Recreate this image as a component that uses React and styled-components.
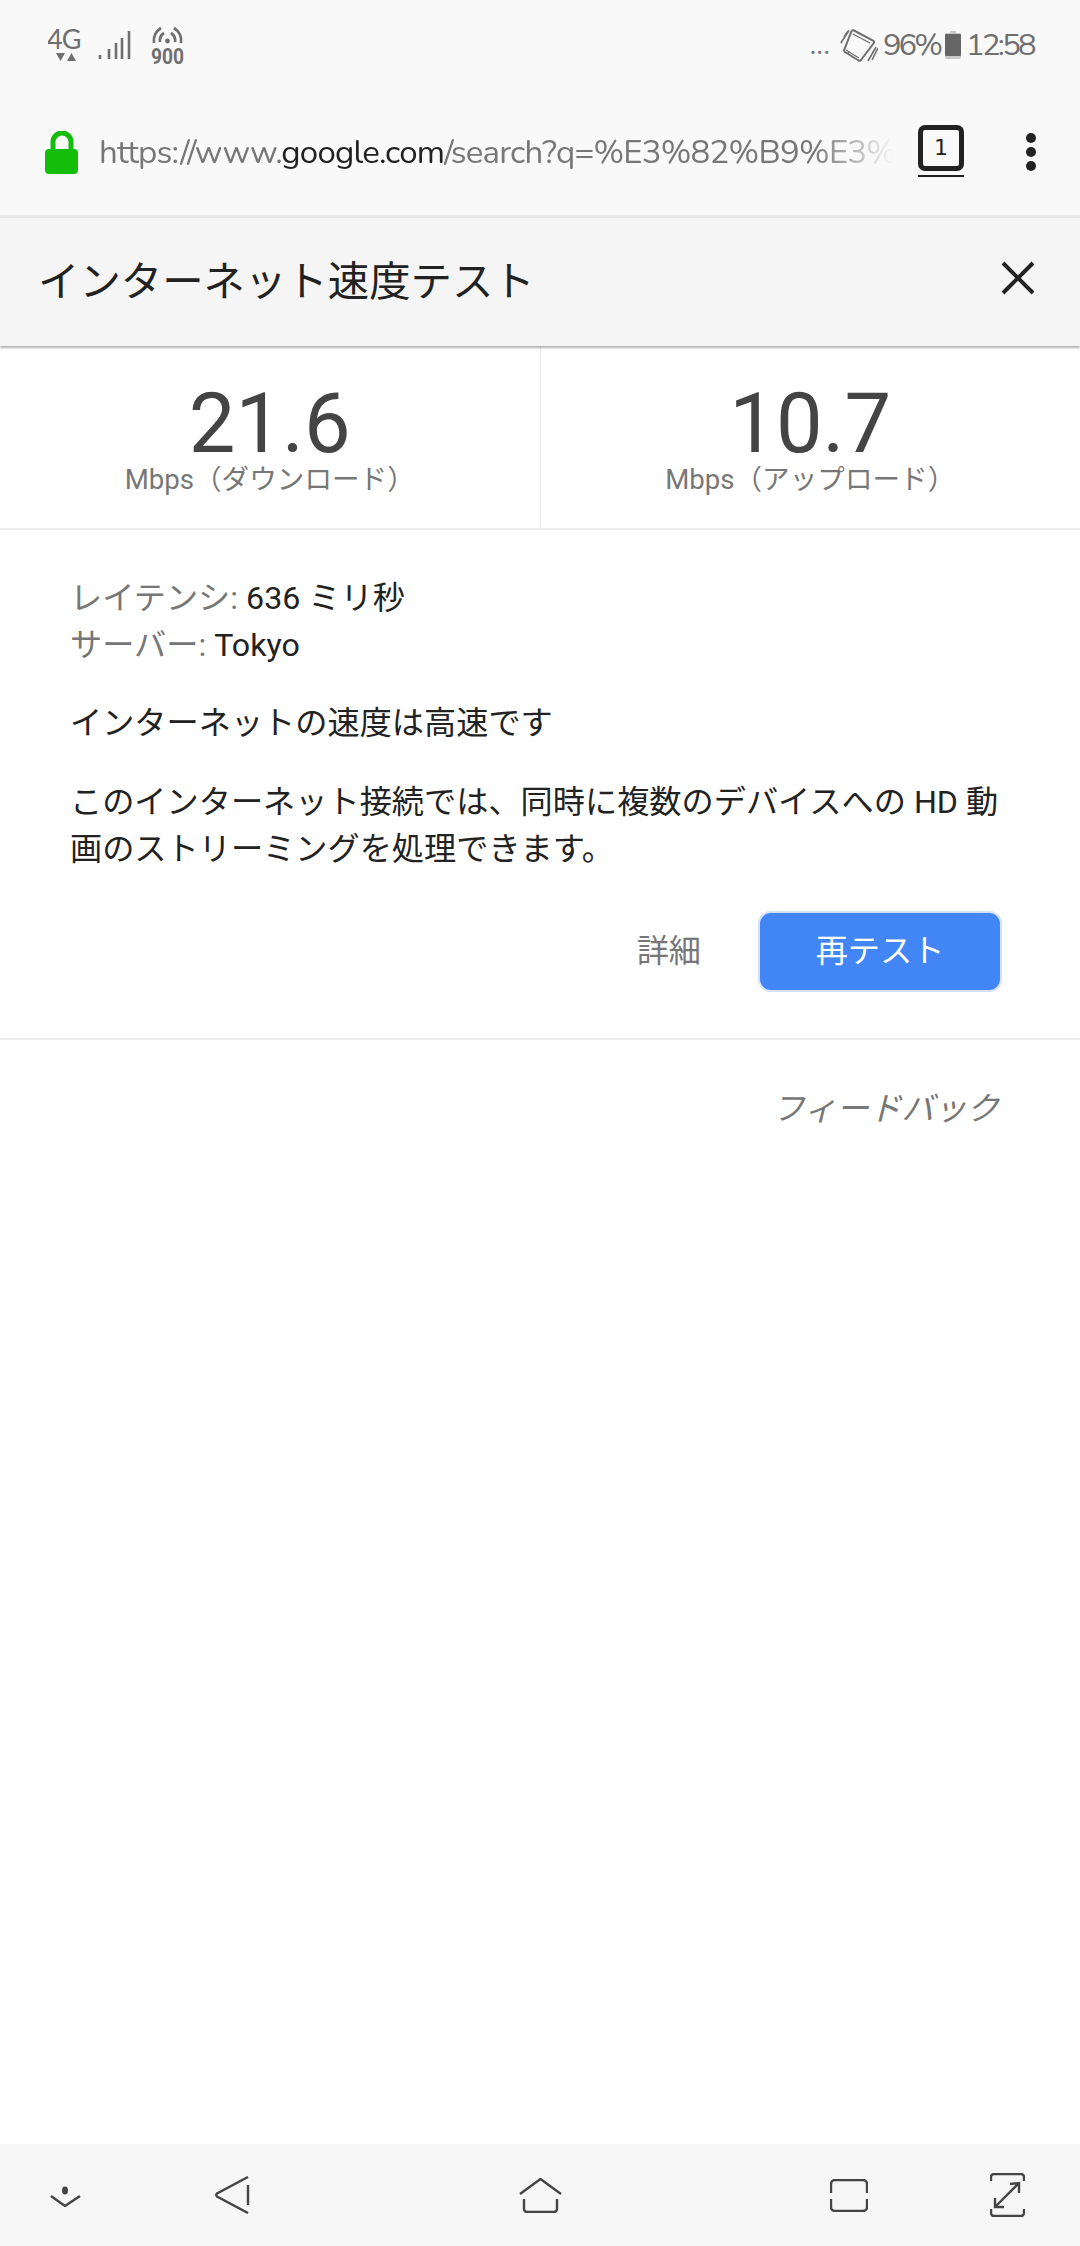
import React from "react"
import styled, { createGlobalStyle } from "styled-components"

const Global = createGlobalStyle`
  html, body { margin: 0; padding: 0; background: #fff; }
  body { font-family: Roboto, "Noto Sans CJK JP", sans-serif; }
`

const Page = styled.div`
  width: 1080px;
  height: 2246px;
  display: flex;
  flex-direction: column;
  overflow: hidden;
  background: #fff;
`

const StatusBar = styled.div`
  height: 90px;
  padding: 0 46px 0 48px;
  display: flex;
  align-items: center;
  justify-content: space-between;
  background: #f9f9f9;
  color: #6f6f6f;
  font-family: Nunito, Lato, sans-serif;
`

const StatusGroup = styled.div`
  display: flex;
  align-items: center;
  gap: ${(p) => p.$gap || 0}px;
`

const StatusText = styled.span`
  font-size: 31px;
  line-height: 34px;
  letter-spacing: ${(p) => p.$spacing}px;
`

const Dots = styled.span`
  font-size: 30px;
  line-height: 30px;
  margin-right: 5px;
  color: #777;
`

const UrlBar = styled.div`
  height: 125px;
  padding: 0 0 0 45px;
  display: flex;
  align-items: center;
  background: #f9f9f9;
  border-bottom: 3px solid #e8e8e8;
`

const Url = styled.div`
  width: 795px;
  margin-left: 20px;
  font-family: Nunito, "Open Sans", Lato, sans-serif;
  font-size: 33px;
  letter-spacing: -0.8px;
  color: #777;
  white-space: nowrap;
  overflow: hidden;
  -webkit-mask-image: linear-gradient(to right, #000 90%, transparent 100%);
  mask-image: linear-gradient(to right, #000 90%, transparent 100%);

  b {
    font-weight: 400;
    color: #222;
  }
`

const TabCount = styled.div`
  margin: 0 0 10px 24px;
  width: 46px;
  height: 46px;
  box-sizing: border-box;
  border: 5px solid #222;
  border-radius: 7px;
  display: flex;
  align-items: center;
  justify-content: center;
  font-family: "DejaVu Sans", Roboto, sans-serif;
  font-size: 22px;
  color: #222;
  position: relative;

  &::after {
    content: "";
    position: absolute;
    left: -5px;
    right: -5px;
    bottom: -11px;
    height: 2px;
    background: #222;
  }
`

const Menu = styled.div`
  margin: 0 0 2px 62px;
  display: flex;
  flex-direction: column;
  gap: 4px;

  i {
    display: block;
    width: 10px;
    height: 10px;
    border-radius: 50%;
    background: #222;
  }
`

const Header = styled.div`
  height: 128px;
  padding: 0 45px 8px 38px;
  box-sizing: border-box;
  display: flex;
  align-items: center;
  justify-content: space-between;
  background: #f5f5f5;
  box-shadow: 0 2px 2px rgba(0, 0, 0, 0.3);
  position: relative;
`

const Title = styled.h1`
  margin: 0;
  font-size: 41.4px;
  font-weight: 400;
  color: #222;
`

const Stats = styled.div`
  height: 182px;
  display: flex;
  border-bottom: 2px solid #ededed;
`

const Stat = styled.div`
  flex: 1;
  display: flex;
  flex-direction: column;
  align-items: center;
  padding-top: 40px;
  box-sizing: border-box;

  & + & {
    border-left: 1px solid #e8e8e8;
  }
`

const Speed = styled.div`
  font-size: 83px;
  line-height: 76px;
  color: #444;
`

const Unit = styled.div`
  font-size: 27.6px;
  line-height: 30px;
  margin-top: 3px;
  color: #777;
`

const Body = styled.div`
  padding: 45px 78px 0 70px;
  font-size: 32.2px;
  line-height: 47px;
  color: #222;
  height: 510px;
  box-sizing: border-box;
  border-bottom: 2px solid #ededed;
`

const Line = styled.div``

const Label = styled.span`
  color: #777;
`

const Para = styled.p`
  margin: ${(p) => p.$top}px 0 0;
`

const Actions = styled.div`
  margin-top: 38px;
  display: flex;
  align-items: center;
  justify-content: flex-end;
  gap: 57px;
`

const TextButton = styled.div`
  color: #777;
`

const Primary = styled.div`
  width: 244px;
  height: 81px;
  box-sizing: border-box;
  border: 2px solid #d3e2fb;
  border-radius: 13px;
  background: #4285f4;
  color: #fff;
  display: flex;
  align-items: center;
  justify-content: center;
`

const Feedback = styled.div`
  padding: 46px 81px 0 0;
  text-align: right;
  font-size: 32.5px;
  line-height: 47px;
  font-style: italic;
  color: #777;
`

const NavBar = styled.div`
  margin-top: auto;
  height: 102px;
  padding-left: 50px;
  display: flex;
  align-items: center;
  background: #f6f6f6;
`

const NavSlot = styled.div`
  display: flex;
  margin-left: ${(p) => p.$left}px;
`

const Lock = () => (
  <svg width="34" height="43" viewBox="0 0 34 43">
    <path d="M8 18v-7a9 9 0 0 1 18 0v7" fill="none" stroke="#13bd0a" strokeWidth="5" />
    <rect x="0" y="18" width="33" height="25" rx="4" fill="#13bd0a" />
  </svg>
)

const FourG = () => (
  <svg width="36" height="33" viewBox="0 0 36 33">
    <text x="-1" y="20" fontFamily="Lato, sans-serif" fontSize="27" letterSpacing="-1" fill="#6f6f6f">4G</text>
    <path d="M8 24h9l-4.500 8zM19 32h9l-4.500-8z" fill="#6f6f6f" />
  </svg>
)

const Signal = () => (
  <svg width="33" height="28" viewBox="0 0 33 28">
    <path d="M2 24v4M11 18v10M18 12v16M24 7v21M31 0v28" stroke="#6f6f6f" strokeWidth="2.600" />
  </svg>
)

const Wifi = () => (
  <svg width="33" height="38" viewBox="0 0 33 38">
    <path d="M3 17a15 15 0 0 1 7-15M30 17a15 15 0 0 0-7-15M9 16a9 9 0 0 1 4-9M24 16a9 9 0 0 0-4-9" fill="none" stroke="#6f6f6f" strokeWidth="2.800" />
    <circle cx="16.500" cy="15" r="2.400" fill="#6f6f6f" />
    <text x="16.500" y="38" textAnchor="middle" fontFamily="Roboto, sans-serif" fontWeight="700" fontSize="22" textLength="33" lengthAdjust="spacingAndGlyphs" fill="#6f6f6f">900</text>
  </svg>
)

const Rotate = () => (
  <svg width="38" height="33" viewBox="0 0 38 33">
    <g fill="none" stroke="#6f6f6f">
      <path d="M14 1.500 L33 11.500 A2 2 0 0 1 33.800 14 L21 31 A2 2 0 0 1 18.500 31.500 L5 23 A2 2 0 0 1 4.300 20.500 L11.500 2.200 A2 2 0 0 1 14 1.500Z" strokeWidth="2" />
      <path d="M9 24l-1-1M13 5l17 9M6 21l13 8" strokeWidth="1.200" />
      <path d="M0.800 14L9 1.500M4 8l4-6M28 32l8-14M32 31l6-12" strokeWidth="1.600" />
    </g>
  </svg>
)

const Battery = () => (
  <svg width="16" height="28" viewBox="0 0 16 28">
    <rect x="5" y="0" width="6" height="3" fill="#c8c8c8" />
    <rect x="0" y="2" width="16" height="26" rx="2" fill="#c8c8c8" />
    <rect x="0" y="3" width="16" height="22" rx="1" fill="#666" />
  </svg>
)

const Close = () => (
  <svg width="34" height="34" viewBox="0 0 34 34">
    <path d="M2 2l30 30M32 2L2 32" stroke="#222" strokeWidth="4" />
  </svg>
)

const navStroke = { fill: "none", stroke: "#444", strokeWidth: 2.4 }

const NavDown = () => (
  <svg width="31" height="24" viewBox="0 0 31 24">
    <ellipse cx="15" cy="7.500" rx="3" ry="4" fill="#444" />
    <path d="M1 13l14 10 15-10" {...navStroke} />
  </svg>
)

const NavBack = () => (
  <svg width="35" height="38" viewBox="0 0 35 38">
    <path d="M33 1L2 17.500a2 2 0 0 0 0 3L33 37M33 9v20" {...navStroke} />
  </svg>
)

const NavHome = () => (
  <svg width="43" height="35" viewBox="0 0 43 35">
    <path d="M1 16L21.500 1 42 16M5 21v10a3 3 0 0 0 3 3h27a3 3 0 0 0 3-3V21" {...navStroke} />
  </svg>
)

const NavRecent = () => (
  <svg width="38" height="33" viewBox="0 0 38 33">
    <path d="M1 14V5a4 4 0 0 1 4-4h28a4 4 0 0 1 4 4v9M1 20v8a4 4 0 0 0 4 4h28a4 4 0 0 0 4-4v-8" {...navStroke} />
  </svg>
)

const NavExpand = () => (
  <svg width="35" height="44" viewBox="0 0 35 44">
    <path d="M1 8V4a3 3 0 0 1 3-3h27a3 3 0 0 1 3 3v4M1 36v4a3 3 0 0 0 3 3h27a3 3 0 0 0 3-3v-4M29 10L5 34M20 11l9-1v10M5 25v9h9" {...navStroke} />
  </svg>
)

export default function App() {
  return (
    <Page>
      <Global />
      <StatusBar>
        <StatusGroup>
          <FourG />
          <NavSlot $left={14}><Signal /></NavSlot>
          <NavSlot $left={20}><Wifi /></NavSlot>
        </StatusGroup>
        <StatusGroup $gap={5}>
          <Dots>...</Dots>
          <Rotate />
          <StatusText $spacing={-3}>96%</StatusText>
          <Battery />
          <StatusText $spacing={-2.7}>12:58</StatusText>
        </StatusGroup>
      </StatusBar>
      <UrlBar>
        <Lock />
        <Url>
          https://www.<b>google.com</b>/search?q=%E3%82%B9%E3%83%94%E3%83%BC%E3%83%89
        </Url>
        <TabCount>1</TabCount>
        <Menu>
          <i />
          <i />
          <i />
        </Menu>
      </UrlBar>
      <Header>
        <Title>インターネット速度テスト</Title>
        <Close />
      </Header>
      <Stats>
        <Stat>
          <Speed>21.6</Speed>
          <Unit>Mbps（ダウンロード）</Unit>
        </Stat>
        <Stat>
          <Speed>10.7</Speed>
          <Unit>Mbps（アップロード）</Unit>
        </Stat>
      </Stats>
      <Body>
        <Line><Label>レイテンシ:</Label> 636 ミリ秒</Line>
        <Line><Label>サーバー:</Label> Tokyo</Line>
        <Para $top={31}>インターネットの速度は高速です</Para>
        <Para $top={32}>このインターネット接続では、同時に複数のデバイスへの HD 動画のストリーミングを処理できます。</Para>
        <Actions>
          <TextButton>詳細</TextButton>
          <Primary>再テスト</Primary>
        </Actions>
      </Body>
      <Feedback>フィードバック</Feedback>
      <NavBar>
        <NavSlot $left={0}><NavDown /></NavSlot>
        <NavSlot $left={134}><NavBack /></NavSlot>
        <NavSlot $left={269}><NavHome /></NavSlot>
        <NavSlot $left={268}><NavRecent /></NavSlot>
        <NavSlot $left={122}><NavExpand /></NavSlot>
      </NavBar>
    </Page>
  )
}
